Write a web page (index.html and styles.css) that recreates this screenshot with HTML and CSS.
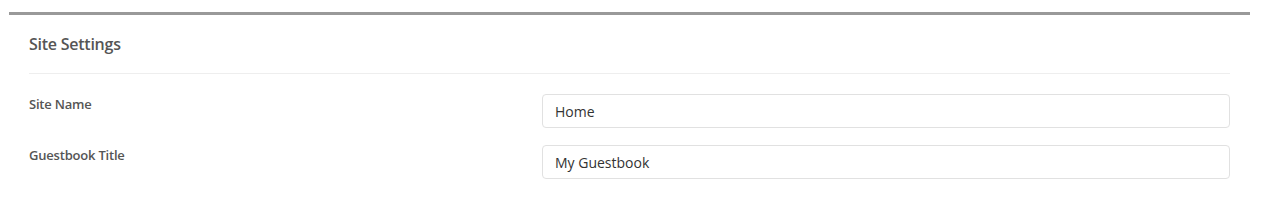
FILE: index.html
```html
<!DOCTYPE html>
<html lang="en">
<head>
  <meta charset="UTF-8">
  <meta name="viewport" content="width=device-width, initial-scale=1.0">
  <title>Site Settings</title>
  <link rel="stylesheet" href="styles.css">
</head>
<body>
  <!--settings panel-->
  <div class="panel">
    <div class="panelHead">
      <h3 class="panelTitle">Site Settings</h3>
    </div>
    <form class="settingsForm">
      <div class="formRow">
        <label class="formLabel" for="siteName">Site Name</label>
        <input class="formInput" id="siteName" type="text" value="Home">
      </div>
      <div class="formRow">
        <label class="formLabel" for="gbTitle">Guestbook Title</label>
        <input class="formInput" id="gbTitle" type="text" value="My Guestbook">
      </div>
    </form>
  </div>
</body>
</html>
```

FILE: styles.css
```css
*{box-sizing: border-box;}
body{
  margin:0;
  padding:12px 11px 0 9px;
  background:#fff;
  font-family:"Open Sans", "Noto Sans", sans-serif;
  color:#555;
}
.panel{
  border-top:3px solid #999;
  padding:0 20px;
}
.panelHead{
  padding:17px 0 17px;
  border-bottom:1px solid #eee;
}
.panelTitle{
  margin:0;
  font-size:16px;
  font-weight:600;
  letter-spacing:-0.25px;
  line-height:24px;
  color:#555;
}
.settingsForm{
  padding-top:20px;
}
.formRow{
  display:grid;
  grid-template-columns:513px 1fr;
  margin-bottom:17px;
}
.formLabel{
  font-size:13px;
  font-weight:600;
  letter-spacing:-0.2px;
  line-height:18px;
  padding-top:1px;
}
.formInput{
  height:34px;
  padding:6px 12px;
  border:1px solid #e1e1e1;
  border-radius:4px;
  font-family:inherit;
  font-size:14px;
  color:#333;
  outline:none;
}
```
